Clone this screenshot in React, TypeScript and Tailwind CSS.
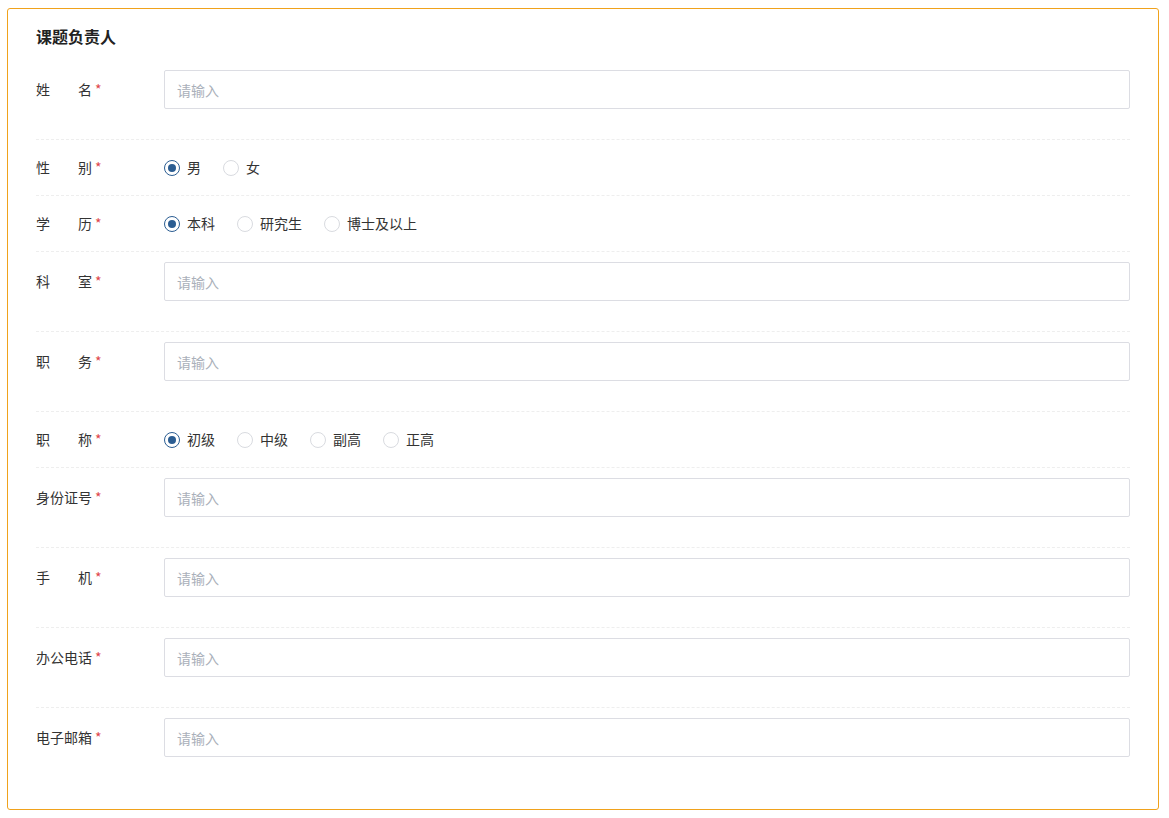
import { useState } from 'react'

type Field =
  | { key: string; label: string; type: 'input' }
  | { key: string; label: string; type: 'radio'; options: string[] }

const FIELDS: Field[] = [
  { key: 'name', label: '姓名', type: 'input' },
  { key: 'gender', label: '性别', type: 'radio', options: ['男', '女'] },
  { key: 'degree', label: '学历', type: 'radio', options: ['本科', '研究生', '博士及以上'] },
  { key: 'dept', label: '科室', type: 'input' },
  { key: 'post', label: '职务', type: 'input' },
  { key: 'title', label: '职称', type: 'radio', options: ['初级', '中级', '副高', '正高'] },
  { key: 'idcard', label: '身份证号', type: 'input' },
  { key: 'mobile', label: '手机', type: 'input' },
  { key: 'phone', label: '办公电话', type: 'input' },
  { key: 'email', label: '电子邮箱', type: 'input' },
]

function Label({ text }: { text: string }) {
  // two-char labels are spread to the width of four chars
  const chars = text.split('')
  return (
    <div className="w-[128px] shrink-0 flex items-center text-[14px] text-[#333]">
      <span className="w-[56px] flex justify-between">
        {chars.map((c, i) => (
          <span key={i}>{c}</span>
        ))}
      </span>
      <span className="text-[#e0464a] ml-[3px]">*</span>
    </div>
  )
}

function Radio({ checked, label, onClick }: { checked: boolean; label: string; onClick: () => void }) {
  return (
    <label onClick={onClick} className="flex items-center cursor-pointer mr-[22px]">
      <span
        className={
          checked
            ? 'w-[16px] h-[16px] rounded-full border border-[#2b5d92] flex items-center justify-center'
            : 'w-[16px] h-[16px] rounded-full border border-[#d9dbe0]'
        }
      >
        {checked && <span className="w-[8px] h-[8px] rounded-full bg-[#2b5d92]" />}
      </span>
      <span className="ml-[7px] text-[14px] text-[#333]">{label}</span>
    </label>
  )
}

export default function App() {
  const [values, setValues] = useState<Record<string, string>>({
    gender: '男',
    degree: '本科',
    title: '初级',
  })

  return (
    <div
      className="pt-[8px] pl-[7px] pr-[10px] pb-[8px] bg-white"
      style={{ fontFamily: '"Noto Sans CJK SC", "Noto Sans", sans-serif' }}
    >
      <div className="w-[1152px] border border-[#f0a21c] rounded-[3px] pl-[28px] pr-[28px] pt-[16px] pb-[22px]">
        <h2 className="text-[16px] font-bold text-[#222] leading-[22px] mb-[13px]">课题负责人</h2>
        {FIELDS.map((f, i) => {
          const last = i === FIELDS.length - 1
          return (
            <div key={f.key} className={last ? '' : 'border-b border-dashed border-[#eeeeee]'}>
              {f.type === 'input' ? (
                <div className="flex items-center pt-[10px] pb-[30px]">
                  <Label text={f.label} />
                  <input
                    placeholder="请输入"
                    className="flex-1 h-[39px] border border-[#dcdde3] rounded-[2px] px-[12px] text-[14px] text-[#333] placeholder:text-[#aab0ba] outline-none"
                  />
                </div>
              ) : (
                <div className="flex items-center h-[55px]">
                  <Label text={f.label} />
                  <div className="flex items-center">
                    {f.options.map((o) => (
                      <Radio
                        key={o}
                        label={o}
                        checked={values[f.key] === o}
                        onClick={() => setValues({ ...values, [f.key]: o })}
                      />
                    ))}
                  </div>
                </div>
              )}
            </div>
          )
        })}
      </div>
    </div>
  )
}
